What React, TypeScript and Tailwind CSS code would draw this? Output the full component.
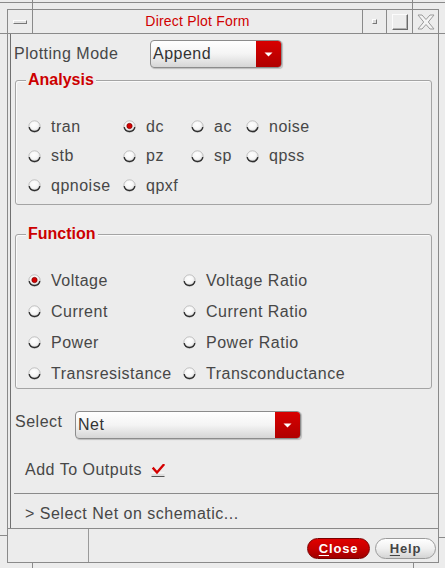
import React from "react";

function Radio({ on }: { on?: boolean }) {
  return (
    <svg width="13" height="13" viewBox="0 0 13 13" className="shrink-0">
      <defs>
        <radialGradient id="rg" cx="0.45" cy="0.35" r="0.65">
          <stop offset="0" stopColor="#ffffff" />
          <stop offset="0.55" stopColor="#f6f6f6" />
          <stop offset="1" stopColor="#cfcfcf" />
        </radialGradient>
      </defs>
      <circle cx="6.5" cy="6.5" r="5.7" fill="url(#rg)" stroke="#b4b4b4" strokeWidth="0.8" />
      <path d="M1.2 7.2 A5.4 5.4 0 0 0 11.8 7.2" fill="none" stroke="#2e2e2e" strokeWidth="1.4" />
      {on && <circle cx="6.5" cy="6" r="2.7" fill="#d40000" stroke="#6a0000" strokeWidth="0.6" />}
    </svg>
  );
}

function RadioItem({ label, on, className }: { label: string; on?: boolean; className?: string }) {
  return (
    <div className={"flex items-center gap-[10px] " + (className ?? "")}>
      <Radio on={on} />
      <span className="tracking-[0.5px]">{label}</span>
    </div>
  );
}

function Dropdown({ value, className }: { value: string; className: string }) {
  return (
    <div
      className={
        "flex h-[28px] rounded-[4px] border border-[#8c8c8c] overflow-hidden bg-gradient-to-b from-white via-[#f4f4f4] to-[#d6d6d6] shadow-[1px_1px_1px_rgba(0,0,0,0.2)] " +
        className
      }
    >
      <div className="flex-1 flex items-center pl-[2px] text-[16px] tracking-[0.5px] text-[#333]">{value}</div>
      <div className="w-[25px] flex items-center justify-center bg-gradient-to-b from-[#d80000] to-[#b00000]">
        <svg width="9" height="5" viewBox="0 0 9 5">
          <path d="M0.5 0.5 L8.5 0.5 L4.5 4.5 Z" fill="#ffffff" />
        </svg>
      </div>
    </div>
  );
}

function Group({ title, className, children }: { title: string; className: string; children: React.ReactNode }) {
  return (
    <div className={"relative ml-[4px] w-[417px] border border-[#a4a4a4] rounded-[3px] shadow-[inset_1px_1px_0_#fafafa] " + className}>
      <div className="absolute left-[10px] top-[-11px] px-[2px] bg-[#ececec] text-[#cc0000] font-bold text-[16px] leading-[20px]">
        {title}
      </div>
      {children}
    </div>
  );
}

export default function App() {
  const line = "border-[#8a8a8a]";
  return (
    <div className="w-[445px] h-[568px] bg-[#ececec] flex flex-col overflow-hidden text-[#474747] text-[16px] font-['Liberation_Sans',Arial,sans-serif]">
      {/* top strip */}
      <div className="flex h-[9px] shrink-0">
        <div className="w-[32px] pt-[2px]">
          <div className="h-px bg-[#8a8a8a]" />
        </div>
        <div className={"w-[381px] border-l border-r pt-[2px] " + line}>
          <div className="h-px bg-[#8a8a8a]" />
        </div>
        <div className="flex-1 pt-[2px]">
          <div className="h-px bg-[#8a8a8a]" />
        </div>
      </div>

      {/* title bar */}
      <div className={"flex h-[25px] shrink-0 border-b " + line}>
        <div className="w-[7px]" />
        <div className={"w-[432px] flex border-l border-t border-r " + line}>
          <div className={"w-[25px] border-r flex items-center justify-center " + line}>
            <div className="w-[14px] h-[4px] border border-t-[#fdfdfd] border-l-[#fdfdfd] border-b-[#777] border-r-[#777] bg-[#e2e2e2]" />
          </div>
          <div className="flex-1 flex items-center justify-center text-[14px] tracking-[0.2px] text-[#d00000]">Direct Plot Form</div>
          <div className={"w-[24px] border-l flex items-center justify-center " + line}>
            <div className="w-[5px] h-[5px] border border-t-[#fdfdfd] border-l-[#fdfdfd] border-b-[#777] border-r-[#777] bg-[#dcdcdc]" />
          </div>
          <div className={"w-[26px] border-l flex items-center justify-center " + line}>
            <div className="w-[16px] h-[16px] border border-t-[#fbfbfb] border-l-[#fbfbfb] border-b-[#6a6a6a] border-r-[#6a6a6a] shadow-[inset_-1px_-1px_0_#b0b0b0]" />
          </div>
          <div className="w-[26px] flex items-center justify-center border-l border-[#8a8a8a]">
            <svg width="20" height="18" viewBox="0 0 20 18">
              <path
                d="M2 2 L6 2 L10 6.5 L14 2 L18 2 L12.3 9 L18 16 L14 16 L10 11.5 L6 16 L2 16 L7.7 9 Z"
                fill="#f4f4f4"
                stroke="#9a9a9a"
                strokeWidth="1"
                strokeLinejoin="round"
              />
            </svg>
          </div>
        </div>
        <div className="flex-1" />
      </div>

      {/* main */}
      <div className="flex h-[529px] shrink-0">
        <div className="w-[7px] flex flex-col">
          <div className="h-[501px]" />
          <div className="h-px bg-[#8a8a8a]" />
        </div>
        <div className={"w-[432px] flex flex-col border-l border-r border-b " + line}>
          {/* content */}
          <div className="h-[494px] pl-[2px] flex">
            <div className="flex-1 border-l border-[#707070] flex flex-col">
              {/* plotting mode */}
              <div className="mt-[6px] h-[28px] flex items-center pl-[3px]">
                <div className="w-[136px] tracking-[0.5px]">Plotting Mode</div>
                <Dropdown value="Append" className="w-[132px]" />
              </div>

              {/* analysis */}
              <Group title="Analysis" className="mt-[12px] h-[125px]">
                <div className="pt-[31px] pl-[12px] flex flex-col">
                  <div className="h-[29.5px] flex items-center">
                    <RadioItem label="tran" className="w-[95px]" />
                    <RadioItem label="dc" on className="w-[68px]" />
                    <RadioItem label="ac" className="w-[55px]" />
                    <RadioItem label="noise" />
                  </div>
                  <div className="h-[29.5px] flex items-center">
                    <RadioItem label="stb" className="w-[95px]" />
                    <RadioItem label="pz" className="w-[68px]" />
                    <RadioItem label="sp" className="w-[55px]" />
                    <RadioItem label="qpss" />
                  </div>
                  <div className="h-[29.5px] flex items-center">
                    <RadioItem label="qpnoise" className="w-[95px]" />
                    <RadioItem label="qpxf" />
                  </div>
                </div>
              </Group>

              {/* function */}
              <Group title="Function" className="mt-[29px] h-[155px]">
                <div className="pt-[30px] pl-[12px] flex flex-col">
                  <div className="h-[31px] flex items-center">
                    <RadioItem label="Voltage" on className="w-[155px]" />
                    <RadioItem label="Voltage Ratio" />
                  </div>
                  <div className="h-[31px] flex items-center">
                    <RadioItem label="Current" className="w-[155px]" />
                    <RadioItem label="Current Ratio" />
                  </div>
                  <div className="h-[31px] flex items-center">
                    <RadioItem label="Power" className="w-[155px]" />
                    <RadioItem label="Power Ratio" />
                  </div>
                  <div className="h-[31px] flex items-center">
                    <RadioItem label="Transresistance" className="w-[155px]" />
                    <RadioItem label="Transconductance" />
                  </div>
                </div>
              </Group>

              {/* select */}
              <div className="mt-[22px] h-[28px] flex pl-[4px]">
                <div className="w-[60px] mt-[1px] leading-[20px] tracking-[0.5px]">Select</div>
                <Dropdown value="Net" className="w-[226px]" />
              </div>

              {/* add to outputs */}
              <div className="mt-[21px] h-[20px] flex items-center pl-[14px] gap-[9px]">
                <span className="tracking-[0.5px]">Add To Outputs</span>
                <svg width="14" height="13" viewBox="0 0 14 13">
                  <rect x="0.5" y="9" width="13" height="3.5" fill="#dedede" />
                  <path d="M0.5 12.5 L13.5 12.5" stroke="#555" strokeWidth="1" />
                  <path d="M0.5 9 L13.5 9" stroke="#fff" strokeWidth="1" />
                  <path d="M2.5 4.5 L6 8.5 L12.5 1" fill="none" stroke="#d40000" strokeWidth="2.4" strokeLinecap="square" />
                </svg>
              </div>

              {/* separator */}
              <div className="mt-[13px] ml-[3px] border-t border-[#8a8a8a]" />

              {/* select net */}
              <div className="flex-1 flex items-center pl-[14px] pt-[6px] tracking-[0.5px]">&gt; Select Net on schematic...</div>
            </div>
          </div>

          {/* button bar */}
          <div className={"h-[34px] flex border-t " + line}>
            <div className="w-[81px] border-r border-[#9a9a9a]" />
            <div className="flex-1 flex justify-end items-start pt-[9px] pr-[2px] gap-[5px]">
              <div className="w-[63px] h-[21px] rounded-full border border-[#7a0000] bg-gradient-to-b from-[#e00000] via-[#c80000] to-[#a00000] flex items-center justify-center text-white font-bold text-[13px] tracking-[0.8px]">
                <span className="underline underline-offset-2">C</span>lose
              </div>
              <div className="w-[61px] h-[21px] rounded-full border border-[#9a9a9a] bg-gradient-to-b from-white via-[#f0f0f0] to-[#d4d4d4] flex items-center justify-center text-[#444] font-bold text-[13px] tracking-[0.8px]">
                <span className="underline underline-offset-2">H</span>elp
              </div>
            </div>
          </div>
        </div>
        <div className="flex-1 flex flex-col">
          <div className="h-[503px]" />
          <div className="h-px bg-[#8a8a8a]" />
        </div>
      </div>

      {/* bottom strip */}
      <div className="flex h-[5px] shrink-0">
        <div className="w-[32px]" />
        <div className={"w-[382px] border-l border-r " + line} />
      </div>
    </div>
  );
}
